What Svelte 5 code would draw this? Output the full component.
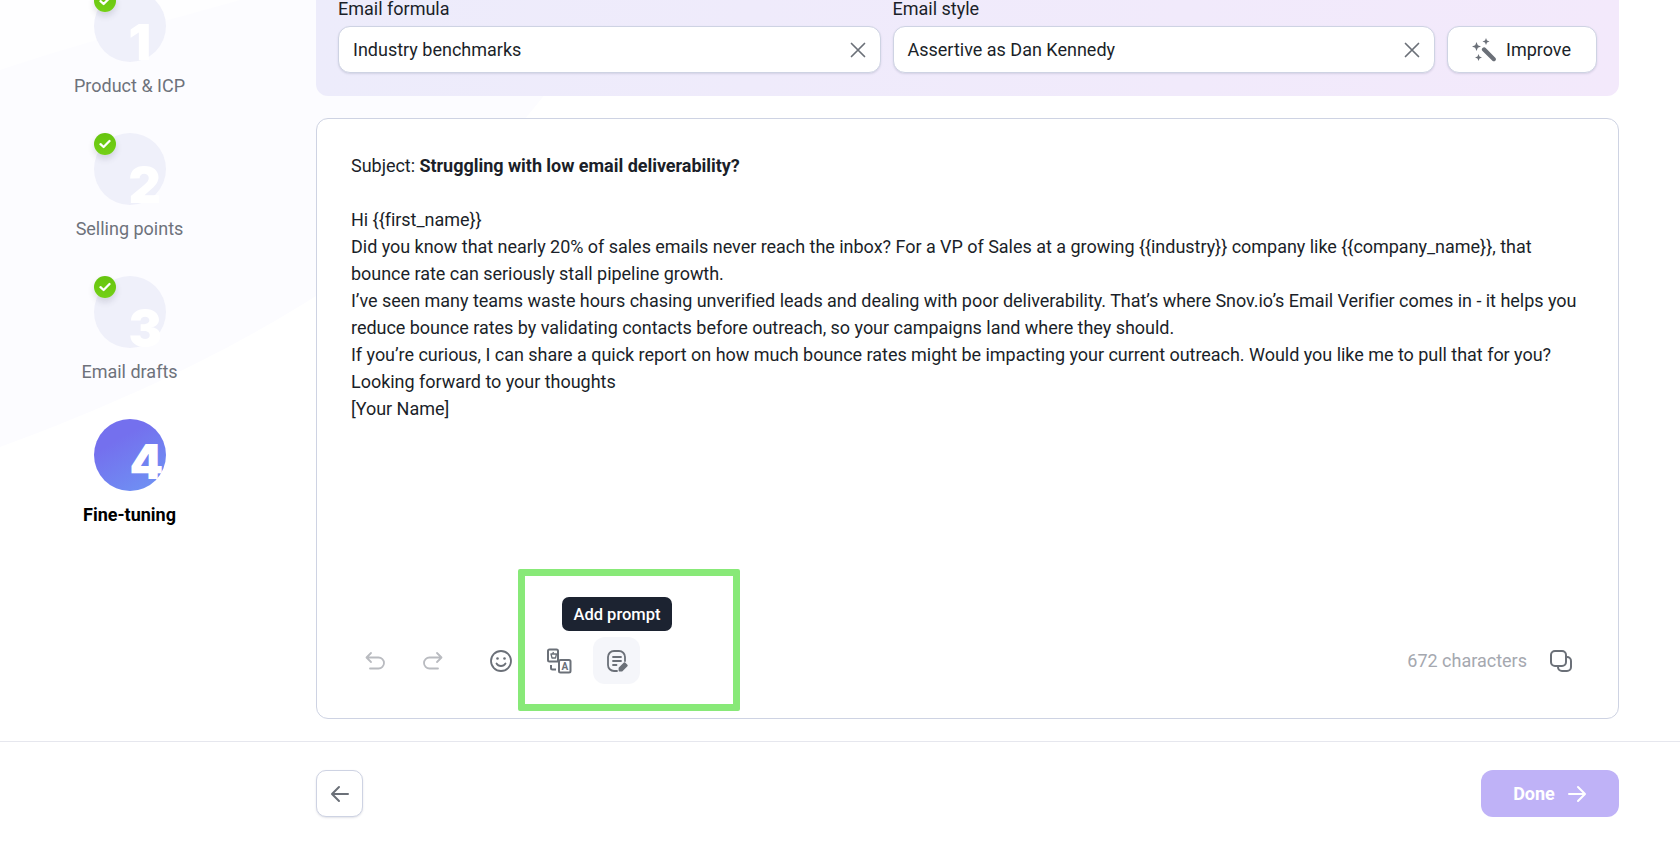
<script>
  const steps = [
    { n: 1, label: "Product & ICP", done: true },
    { n: 2, label: "Selling points", done: true },
    { n: 3, label: "Email drafts", done: true },
    { n: 4, label: "Fine-tuning", done: false },
  ];
  const body = [
    "Hi {{first_name}}",
    "Did you know that nearly 20% of sales emails never reach the inbox? For a VP of Sales at a growing {{industry}} company like {{company_name}}, that bounce rate can seriously stall pipeline growth.",
    "I’ve seen many teams waste hours chasing unverified leads and dealing with poor deliverability. That’s where Snov.io’s Email Verifier comes in - it helps you reduce bounce rates by validating contacts before outreach, so your campaigns land where they should.",
    "If you’re curious, I can share a quick report on how much bounce rates might be impacting your current outreach. Would you like me to pull that for you?",
    "Looking forward to your thoughts",
    "[Your Name]",
  ];
  const fields = [
    { label: "Email formula", value: "Industry benchmarks" },
    { label: "Email style", value: "Assertive as Dan Kennedy" },
  ];
</script>

<div class="page">
  <svg class="swoosh" viewBox="0 0 1680 845" aria-hidden="true">
    <path d="M0 0H610C530 130 400 300 0 447Z" fill="#fcfcff" />
    <path d="M0 70C90 40 170 20 240 0H0Z" fill="#fefeff" />
  </svg>

  <div class="layout">
    <aside class="steps">
      {#each steps as step}
        <div class="step" class:active={!step.done}>
          <div class="circle">
            <span class="digit">{step.n}</span>
            {#if step.done}
              <span class="badge">
                <svg width="12" height="10" viewBox="0 0 12 10" fill="none">
                  <path d="M1.5 5.2 4.6 8 10.5 2" stroke="#fff" stroke-width="2.3" stroke-linecap="round" stroke-linejoin="round" />
                </svg>
              </span>
            {/if}
          </div>
          <div class="step-label">{step.label}</div>
        </div>
      {/each}
    </aside>

    <main class="content">
      <section class="panel">
        {#each fields as field}
          <div class="field">
            <div class="field-label">{field.label}</div>
            <div class="select">
              <span>{field.value}</span>
              <svg width="16" height="16" viewBox="0 0 16 16" fill="none">
                <path d="M1.5 1.5 14.5 14.5M14.5 1.5 1.5 14.5" stroke="#6b7078" stroke-width="1.7" stroke-linecap="round" />
              </svg>
            </div>
          </div>
        {/each}
        <button class="improve">
          <svg width="26" height="26" viewBox="0 0 26 26" fill="#6b7078">
            <path d="M11.500 11c1-1 2.300-1 3.200 0l9.600 9.800c.9.900.9 2.100 0 2.900-.9.800-2 .8-2.900 0l-9.900-9.600c-1-.9-1-2.200 0-3.100Z" />
            <path d="M5.500 5l1.300 3.200 3.200 1.300-3.200 1.300-1.300 3.200-1.300-3.200L1 9.500l3.200-1.300ZM15 1l1 2.500 2.500 1-2.500 1-1 2.500-1-2.500-2.500-1 2.500-1ZM7.500 17l1 2.500 2.500 1-2.500 1-1 2.500-1-2.500-2.500-1 2.500-1Z" />
          </svg>
          Improve
        </button>
      </section>

      <section class="editor">
        <div class="text">
          <p class="subject">Subject: <b>Struggling with low email deliverability?</b></p>
          {#each body as line}
            <p>{line}</p>
          {/each}
        </div>

        <div class="toolbar">
          <div class="tools">
            <button class="tool dim" aria-label="Undo">
              <svg width="24" height="24" viewBox="0 0 24 24" fill="none" stroke="currentColor" stroke-width="1.8" stroke-linecap="round" stroke-linejoin="round">
                <path d="M8 4 3.500 8.500 8 13M4 8.500h11.500a5 5 0 0 1 0 11H7" />
              </svg>
            </button>
            <button class="tool dim" aria-label="Redo">
              <svg width="24" height="24" viewBox="0 0 24 24" fill="none" stroke="currentColor" stroke-width="1.8" stroke-linecap="round" stroke-linejoin="round">
                <path d="M16 4l4.500 4.500L16 13M20 8.500H8.500a5 5 0 0 0 0 11H17" />
              </svg>
            </button>
            <button class="tool emoji" aria-label="Emoji">
              <svg width="24" height="24" viewBox="0 0 24 24" fill="none" stroke="currentColor" stroke-width="1.8" stroke-linecap="round">
                <circle cx="12" cy="12" r="10" />
                <path d="M7.500 14.500c1 1.700 2.600 2.500 4.500 2.500s3.500-.8 4.500-2.500" />
                <circle cx="8.500" cy="9.500" r="1.300" fill="currentColor" stroke="none" />
                <circle cx="15.500" cy="9.500" r="1.300" fill="currentColor" stroke="none" />
              </svg>
            </button>
            <button class="tool" aria-label="Translate">
              <svg width="26" height="26" viewBox="0 0 26 26" fill="none" stroke="currentColor" stroke-width="2" stroke-linejoin="round">
                <path d="M12 12.500V3a1.500 1.500 0 0 0-1.500-1.500h-7A1.500 1.500 0 0 0 2 3v9a1.500 1.500 0 0 0 1.500 1.500H12Z" />
                <rect x="13" y="12" width="11.500" height="12.500" rx="1.500" fill="#fff" />
                <path d="M5 6h5.500l-1 4H6ZM6.500 6l1-2" stroke-width="1.300" />
                <path d="M5 17v3a1.500 1.500 0 0 0 1.500 1.500H10" />
                <text x="18.800" y="22" text-anchor="middle" class="glyph">A</text>
              </svg>
            </button>
            <button class="tool current" aria-label="Add prompt">
              <svg width="24" height="24" viewBox="0 0 24 24" fill="none" stroke="currentColor" stroke-width="1.800" stroke-linecap="round" stroke-linejoin="round">
                <path d="M12 22H9a6 6 0 0 1-6-6V8a6 6 0 0 1 6-6h5a6 6 0 0 1 6 6v4" />
                <path d="M8 8h8M8 12h8M8 16h3.500" />
                <path d="M14.500 21.500v-2.300l5-5 2.300 2.300-5 5Z" fill="currentColor" />
              </svg>
            </button>
            <div class="tooltip">Add prompt</div>
            <div class="highlight"></div>
          </div>

          <div class="meta">
            <span class="count">672 characters</span>
            <svg width="24" height="24" viewBox="0 0 24 24" fill="none" stroke="#6b7078" stroke-width="2">
              <rect x="2" y="2" width="15" height="15" rx="4" />
              <path d="M17 8h1a4 4 0 0 1 4 4v6a4 4 0 0 1-4 4h-5a4 4 0 0 1-4-4v-1" />
            </svg>
          </div>
        </div>
      </section>
    </main>
  </div>

  <footer class="footer">
    <button class="back" aria-label="Back">
      <svg width="20" height="20" viewBox="0 0 20 20" fill="none" stroke="#6b7078" stroke-width="2" stroke-linecap="round" stroke-linejoin="round">
        <path d="M18 10H2.500M9 3l-7 7 7 7" />
      </svg>
    </button>
    <button class="done">
      Done
      <svg width="20" height="20" viewBox="0 0 20 20" fill="none" stroke="#fff" stroke-width="2" stroke-linecap="round" stroke-linejoin="round">
        <path d="M2 10h15.500M11 3l7 7-7 7" />
      </svg>
    </button>
  </footer>
</div>

<style>
  :global(body) {
    margin: 0;
    background: #fff;
  }

  .page {
    position: relative;
    width: 1680px;
    height: 845px;
    overflow: hidden;
    font-family: Roboto, "Liberation Sans", sans-serif;
    color: #1b1f29;
  }

  .swoosh {
    position: absolute;
    inset: 0;
    width: 1680px;
    height: 845px;
  }

  .layout {
    position: relative;
    display: flex;
    height: 741px;
  }

  .steps {
    width: 259px;
    margin-right: 57px;
    margin-top: -10px;
    display: flex;
    flex-direction: column;
    gap: 37px;
  }

  .step {
    display: flex;
    flex-direction: column;
    align-items: center;
    gap: 14px;
  }

  .circle {
    position: relative;
    width: 72px;
    height: 72px;
    border-radius: 50%;
    background: #eff0fa;
  }

  .active .circle {
    background: linear-gradient(150deg, #7470ee 30%, #6f90f3 90%);
  }

  .digit {
    position: absolute;
    left: 35px;
    bottom: -5px;
    font-family: Inter, sans-serif;
    font-weight: 900;
    font-size: 50px;
    line-height: 50px;
    color: #fff;
  }

  .active .digit {
    left: 36px;
    bottom: 5px;
    font-size: 48px;
    line-height: 48px;
  }

  .badge {
    position: absolute;
    left: 0;
    top: 0;
    width: 22px;
    height: 22px;
    border-radius: 50%;
    background: linear-gradient(#66c40f, #74d016);
    display: flex;
    align-items: center;
    justify-content: center;
    box-shadow: 0 4px 6px rgba(60, 60, 90, 0.16);
  }

  .step-label {
    font-size: 18px;
    line-height: 20px;
    color: #6e727b;
  }

  .active .step-label {
    color: #000;
    font-weight: 700;
  }

  .content {
    width: 1303px;
    display: flex;
    flex-direction: column;
    gap: 22px;
    margin-top: -21px;
  }

  .panel {
    display: flex;
    align-items: flex-end;
    gap: 12px;
    padding: 20px 22px 23px;
    border-radius: 0 0 12px 12px;
    background: linear-gradient(90deg, #edecfb, #f3e9fb);
  }

  .field {
    flex: 1;
  }

  .field-label {
    font-size: 18px;
    line-height: 20px;
    margin-bottom: 7px;
  }

  .select,
  .improve {
    height: 47px;
    box-sizing: border-box;
    background: #fff;
    border: 1px solid #ced3e3;
    border-radius: 12px;
    box-shadow: 0 1px 2px rgba(90, 95, 130, 0.18);
    font-family: inherit;
    font-size: 18px;
    color: #1b1f29;
  }

  .select {
    display: flex;
    align-items: center;
    justify-content: space-between;
    padding: 0 14px;
  }

  .improve {
    width: 150px;
    display: flex;
    align-items: center;
    justify-content: center;
    gap: 9px;
    padding: 0 2px 0 0;
  }

  .editor {
    flex: 1;
    display: flex;
    flex-direction: column;
    justify-content: space-between;
    margin-bottom: 22px;
    padding: 32.500px 30px 34px 34px;
    background: #fff;
    border: 1px solid #ced3e3;
    border-radius: 12px;
    box-sizing: border-box;
  }

  .text {
    font-size: 18px;
    line-height: 27px;
    letter-spacing: -0.03px;
  }

  .text p {
    margin: 0;
  }

  .text .subject {
    margin-bottom: 27px;
  }

  .toolbar {
    display: flex;
    align-items: center;
    justify-content: space-between;
  }

  .tools {
    position: relative;
    display: flex;
    align-items: center;
  }

  .tool {
    width: 47px;
    height: 47px;
    margin-left: 11px;
    padding: 0;
    display: flex;
    align-items: center;
    justify-content: center;
    border: none;
    border-radius: 12px;
    background: none;
    color: #6b7078;
  }

  .tool:first-child {
    margin-left: 0;
  }

  .dim {
    color: #b9bbc0;
  }

  .emoji {
    margin-left: 21px;
  }

  .current {
    margin-left: 11px;
    background: #f5f6fa;
  }

  .glyph {
    font-family: Roboto, sans-serif;
    font-size: 10px;
    font-weight: 700;
    fill: currentColor;
    stroke: none;
  }

  .tooltip {
    position: absolute;
    left: 211px;
    top: -40px;
    width: 110px;
    height: 34px;
    display: flex;
    align-items: center;
    justify-content: center;
    border-radius: 7px;
    background: #1c2331;
    color: #fff;
    font-size: 16.500px;
    font-weight: 500;
  }

  .highlight {
    position: absolute;
    left: 167px;
    top: -68px;
    width: 222px;
    height: 142px;
    box-sizing: border-box;
    border: 7px solid #88e978;
    border-radius: 2px;
  }

  .meta {
    display: flex;
    align-items: center;
    gap: 22px;
    padding-right: 15px;
  }

  .count {
    font-size: 18px;
    color: #a5a8af;
  }

  .footer {
    position: relative;
    display: flex;
    justify-content: space-between;
    height: 104px;
    box-sizing: border-box;
    padding: 28px 61px 0 316px;
    border-top: 1px solid #e6e7ee;
  }

  .back {
    width: 47px;
    height: 47px;
    padding: 0;
    display: flex;
    align-items: center;
    justify-content: center;
    background: #fff;
    border: 1px solid #ced3e3;
    border-radius: 10px;
    box-shadow: 0 1px 2px rgba(90, 95, 130, 0.18);
  }

  .done {
    width: 138px;
    height: 47px;
    padding: 0;
    display: flex;
    align-items: center;
    justify-content: center;
    gap: 12px;
    border: none;
    border-radius: 12px;
    background: #bfb2f7;
    color: #fff;
    font-family: inherit;
    font-size: 18px;
    font-weight: 700;
  }
</style>
